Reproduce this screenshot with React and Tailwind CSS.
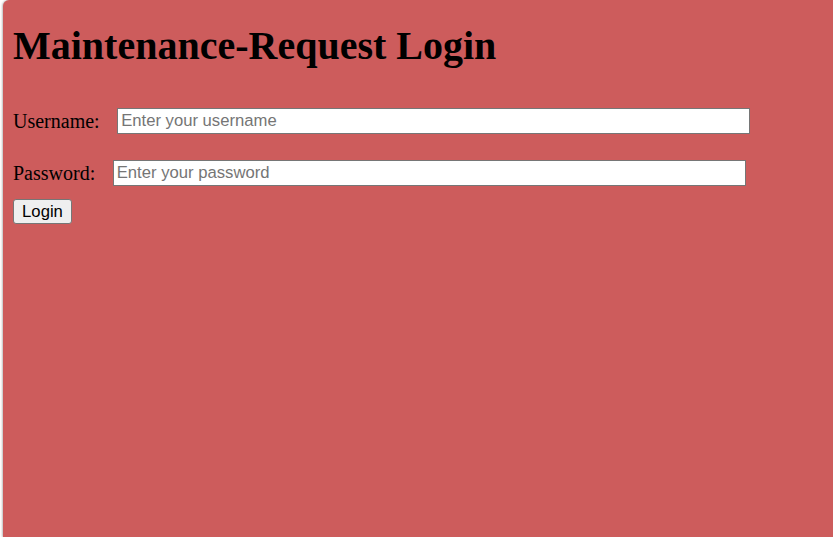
import React from 'react';

const App = () => {
  return (
    <div className="min-h-[537px] bg-white pl-[3px]">
      <div className="min-h-[537px] rounded-tl-[6px] bg-[#cd5c5c] px-[10px] pt-[23px] shadow-[-1px_0_2px_rgba(0,0,0,0.25)] font-['Liberation_Serif',serif] text-black">
        {/* Title */}
        <h1 className="text-[40px] font-bold leading-[46px]">Maintenance-Request Login</h1>

        <form className="mt-[39px]" onSubmit={(e) => e.preventDefault()}>
          <div className="flex h-[26px] items-center">
            <label htmlFor="username" className="text-[20px] leading-[23px]">Username:</label>
            <input
              id="username"
              type="text"
              placeholder="Enter your username"
              className="ml-[17.5px] h-[26px] w-[633px] border border-[#767676] bg-white px-[3px] font-['Liberation_Sans',Arial,sans-serif] text-[16.67px] text-black placeholder:text-[#757575] outline-none"
            />
          </div>

          <div className="mt-[26px] flex h-[26px] items-center">
            <label htmlFor="password" className="text-[20px] leading-[23px]">Password:</label>
            <input
              id="password"
              type="password"
              placeholder="Enter your password"
              className="ml-[17.5px] h-[26px] w-[633px] border border-[#767676] bg-white px-[3px] font-['Liberation_Sans',Arial,sans-serif] text-[16.67px] text-black placeholder:text-[#757575] outline-none"
            />
          </div>

          <button
            type="submit"
            className="mt-[13px] h-[25px] w-[59px] rounded-[3px] border border-[#767676] bg-[#efefef] font-['Liberation_Sans',Arial,sans-serif] text-[16.67px] leading-[19px] text-black"
          >
            Login
          </button>
        </form>
      </div>
    </div>
  );
};

export default App;
